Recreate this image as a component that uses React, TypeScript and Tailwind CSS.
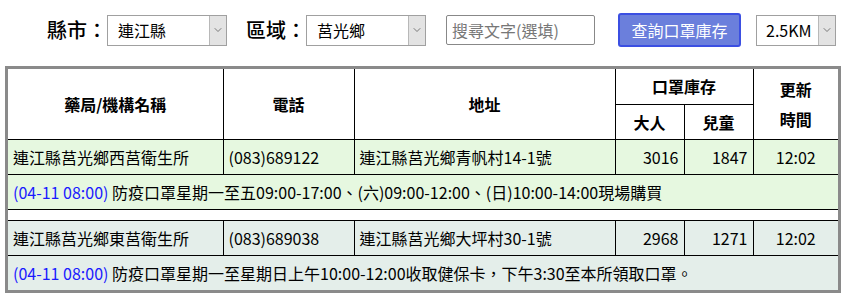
import { ChevronDown } from "lucide-react";

const rows = [
  {
    name: "連江縣莒光鄉西莒衛生所",
    phone: "(083)689122",
    addr: "連江縣莒光鄉青帆村14-1號",
    adult: 3016,
    child: 1847,
    time: "12:02",
    note: "防疫口罩星期一至五09:00-17:00、(六)09:00-12:00、(日)10:00-14:00現場購買",
    bg: "bg-[#e6f8e0]",
  },
  {
    name: "連江縣莒光鄉東莒衛生所",
    phone: "(083)689038",
    addr: "連江縣莒光鄉大坪村30-1號",
    adult: 2968,
    child: 1271,
    time: "12:02",
    note: "防疫口罩星期一至星期日上午10:00-12:00收取健保卡，下午3:30至本所領取口罩。",
    bg: "bg-[#e4eeea]",
  },
];

function FakeSelect({ value, width }: { value: string; width: string }) {
  return (
    <div className={`flex h-[31px] shrink-0 ${width} items-stretch border border-[#a0a0a0] bg-white`}>
      <span className="flex flex-1 items-center pl-[10px] text-[16px] text-black">{value}</span>
      <span className="flex w-[17px] items-center justify-center border-l border-[#b8b8b8] bg-[#e3e3e3]">
        <ChevronDown className="h-3 w-3 text-[#555]" strokeWidth={1.5} />
      </span>
    </div>
  );
}

export default function App() {
  return (
    <div className="h-[297px] w-[845px] bg-white font-['Noto_Sans_CJK_TC','Noto_Sans',sans-serif] text-black">
      {/* search bar */}
      <div className="flex h-[59px] items-center whitespace-nowrap pl-[47px] pt-[1px]">
        <span className="shrink-0 text-[20px] font-medium leading-none">縣市：</span>
        <FakeSelect value="連江縣" width="w-[120px]" />
        <span className="ml-[19px] shrink-0 text-[20px] font-medium leading-none">區域：</span>
        <FakeSelect value="莒光鄉" width="w-[120px]" />
        <div className="ml-[20px] flex h-[30px] w-[149px] shrink-0 items-center rounded-[2px] border border-[#888] pl-[5px] text-[16px] text-[#777]">
          搜尋文字(選填)
        </div>
        <button className="ml-[23px] h-[34px] w-[123px] shrink-0 rounded-[3px] border-2 border-[#3b4fe2] bg-[#6b7fdc] text-[16px] text-white">
          查詢口罩庫存
        </button>
        <div className="ml-[15px] flex h-[31px] w-[80px] shrink-0 items-stretch border border-[#a0a0a0] bg-white">
          <span className="flex flex-1 items-center pl-[9px] text-[16px]">2.5KM</span>
          <span className="flex w-[17px] items-center justify-center border-l border-[#b8b8b8] bg-[#e3e3e3]">
            <ChevronDown className="h-3 w-3 text-[#555]" strokeWidth={1.5} />
          </span>
        </div>
      </div>

      {/* table */}
      <div className="ml-[5px] mt-[7px] w-[836px] border-[3px] border-[#8a8a8a]">
        <table className="w-full table-fixed border-collapse text-[16px]">
          <colgroup>
            <col className="w-[215px]" />
            <col className="w-[131px]" />
            <col className="w-[261px]" />
            <col className="w-[69px]" />
            <col className="w-[69px]" />
            <col />
          </colgroup>
          <thead>
            <tr className="h-[35px] text-[16px] font-bold">
              <th rowSpan={2} className="border-r border-black">藥局/機構名稱</th>
              <th rowSpan={2} className="border-x border-black">電話</th>
              <th rowSpan={2} className="border-x border-black">地址</th>
              <th colSpan={2} className="border border-t-0 border-black">口罩庫存</th>
              <th rowSpan={2} className="border-l border-black leading-[30px]">
                更新
                <br />
                時間
              </th>
            </tr>
            <tr className="h-[35px] text-[16px] font-bold">
              <th className="border border-black">大人</th>
              <th className="border border-black">兒童</th>
            </tr>
          </thead>
          <tbody>
            {rows.map((r, i) => (
              <>
                {i > 0 && (
                  <tr key={`sp${i}`} className="h-[11px]">
                    <td colSpan={6} className="border-y border-black bg-white" />
                  </tr>
                )}
                <tr key={`r${i}`} className={`h-[35px] ${r.bg}`}>
                  <td className="border border-l-0 border-black pl-[5px]">{r.name}</td>
                  <td className="border border-black pl-[5px]">{r.phone}</td>
                  <td className="border border-black pl-[5px]">{r.addr}</td>
                  <td className="border border-black pr-[5px] text-right">{r.adult}</td>
                  <td className="border border-black pr-[5px] text-right">{r.child}</td>
                  <td className="border border-r-0 border-black text-center">{r.time}</td>
                </tr>
                <tr key={`n${i}`} className={`h-[35px] ${r.bg}`}>
                  <td colSpan={6} className={`border-t border-black pl-[5px] ${i === 0 ? "border-b" : ""}`}>
                    <span className="text-[#1a1aff]">(04-11 08:00)</span> {r.note}
                  </td>
                </tr>
              </>
            ))}
          </tbody>
        </table>
      </div>
    </div>
  );
}
